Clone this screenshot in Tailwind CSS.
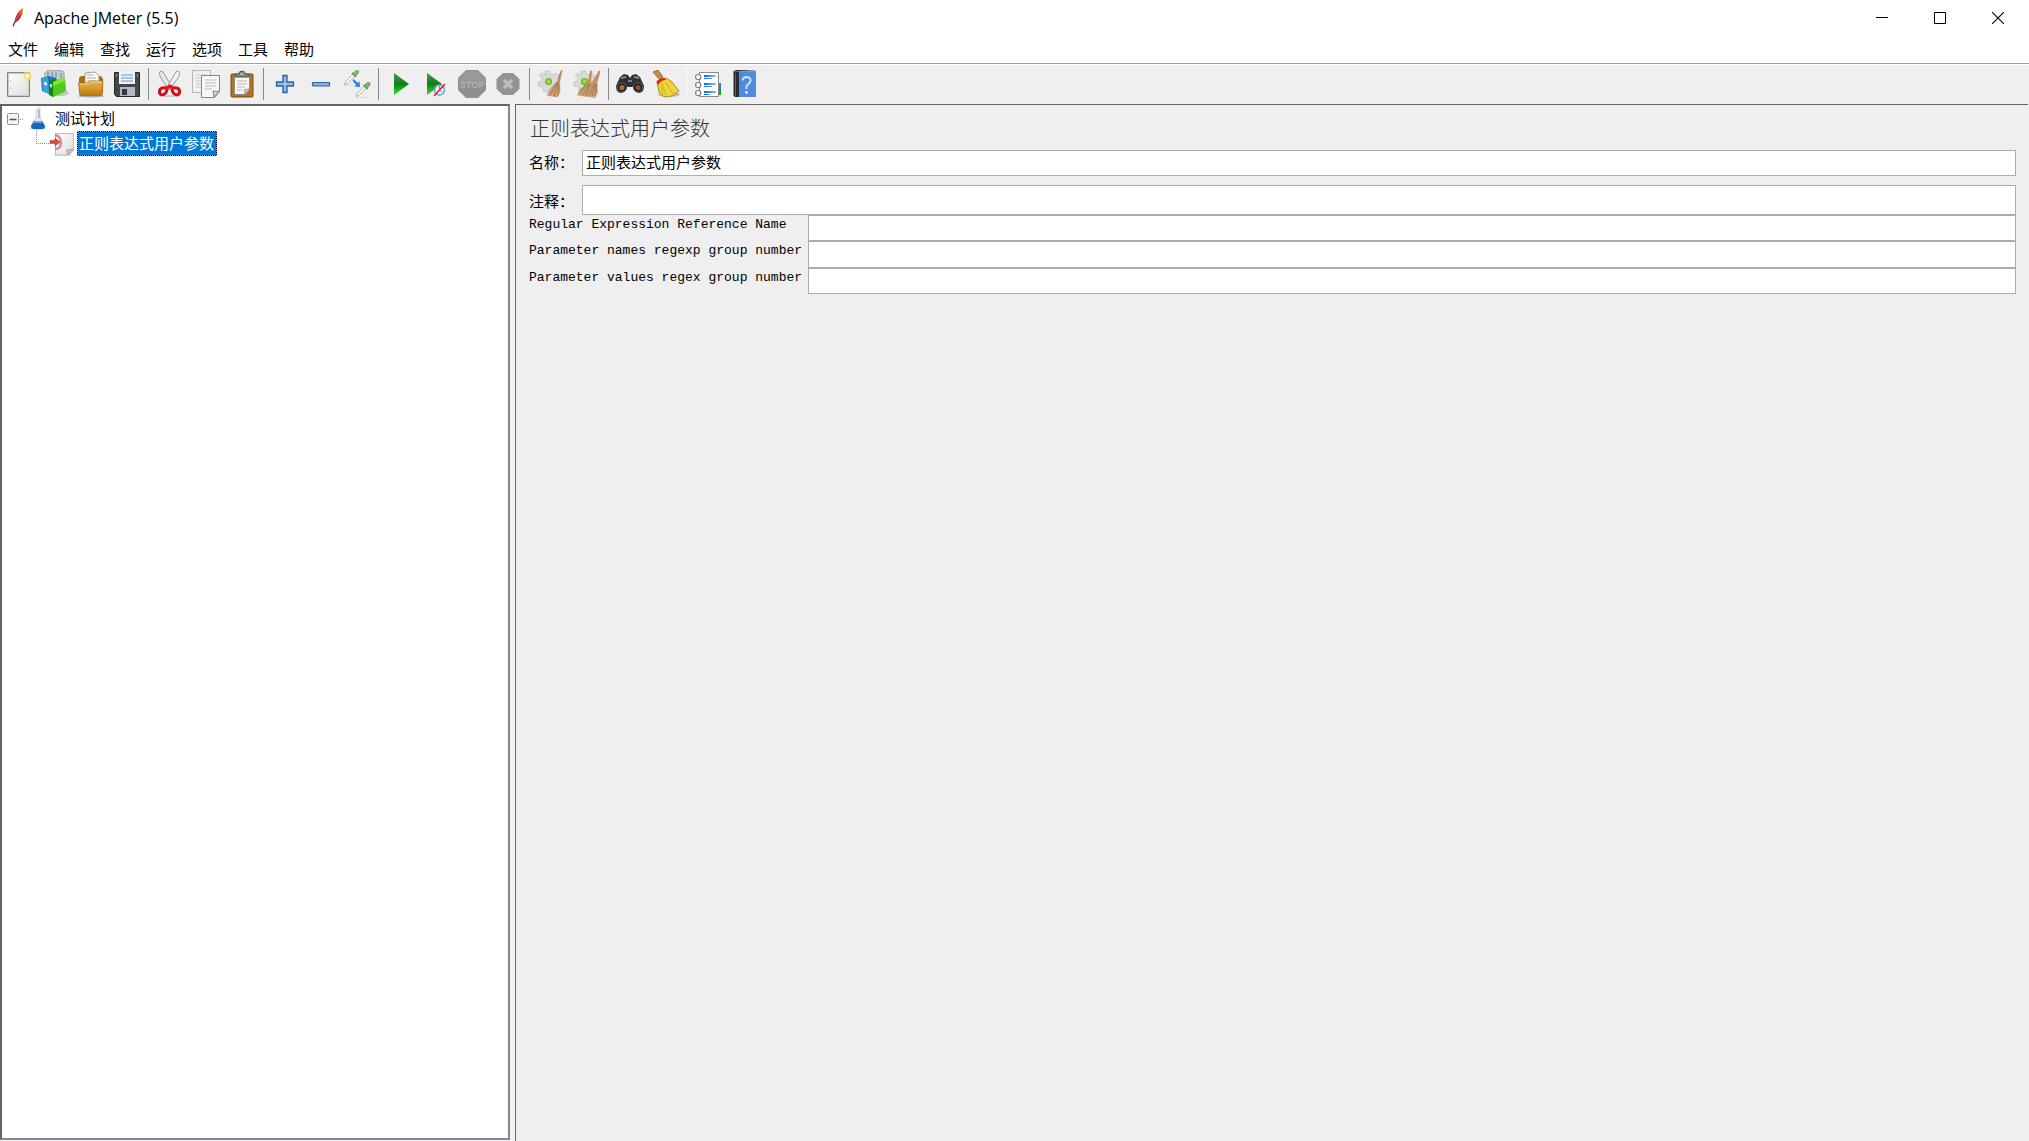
<!DOCTYPE html>
<html lang="zh-CN">
<head>
<meta charset="utf-8">
<title>Apache JMeter (5.5)</title>
<script src="https://cdn.jsdelivr.net/npm/@tailwindcss/browser@4"></script>
</head>
<body class="flex h-screen flex-col overflow-hidden bg-white font-['Noto_Sans_CJK_SC',sans-serif] text-[15px] leading-5 text-black">
<svg class="absolute size-0" aria-hidden="true">
  <defs>
    <linearGradient id="gold" x2="0" y2="1"><stop stop-color="#e9b84c"/><stop offset="1" stop-color="#bd7a10"/></linearGradient>
    <linearGradient id="play" x2="0" y2="1"><stop stop-color="#4d9a4d"/><stop offset=".48" stop-color="#1c7a1c"/><stop offset=".52" stop-color="#0a8a0a"/><stop offset="1" stop-color="#2fe02f"/></linearGradient>
    <linearGradient id="paper" x2="1" y2="1"><stop stop-color="#ffffff"/><stop offset="1" stop-color="#dcdcdc"/></linearGradient>
    <linearGradient id="blueline" x2="1" y2="0"><stop stop-color="#0c5fe8"/><stop offset="1" stop-color="#8fc0ff"/></linearGradient>
    <linearGradient id="feather" x1="1" y1="0" x2="0" y2="1"><stop stop-color="#f79a23"/><stop offset=".4" stop-color="#d22128"/><stop offset="1" stop-color="#6b2a7e"/></linearGradient>
    <radialGradient id="leaf"><stop stop-color="#b6ef5a"/><stop offset="1" stop-color="#5fb313"/></radialGradient>
    <linearGradient id="straw" x2="0" y2="1"><stop stop-color="#b98a5c"/><stop offset="1" stop-color="#d0a478"/></linearGradient>
  </defs>
</svg>

<header class="flex h-9 shrink-0 items-center">
  <svg class="ml-2.5 h-5 w-4" viewBox="0 0 16 20" aria-hidden="true"><path d="M13 0C9 2 6 7 4.500 13L3 18.500L5.500 14.500C9 13 11 9 12.500 5.500Z" fill="url(#feather)"/><path d="M11 3L5.500 13" stroke="#f2a8a0" stroke-width=".5"/><path d="M4.500 14.500L3 18.500" stroke="#3f2250"/></svg>
  <h1 class="ml-2 grow font-['Open_Sans',sans-serif] text-[16px]">Apache JMeter (5.5)</h1>
  <div class="mr-0.5 flex h-full">
    <button class="flex w-[58px] items-center justify-center" aria-label="最小化"><svg class="size-3" viewBox="0 0 12 12"><path d="M0 5.500H12" stroke="#000"/></svg></button>
    <button class="flex w-[58px] items-center justify-center" aria-label="最大化"><svg class="size-3" viewBox="0 0 12 12"><path d="M.5.5h11v11H.5z" fill="none" stroke="#000"/></svg></button>
    <button class="flex w-[58px] items-center justify-center" aria-label="关闭"><svg class="size-3" viewBox="0 0 12 12"><path d="M0 0L12 12M12 0L0 12" stroke="#000" stroke-width="1.100"/></svg></button>
  </div>
</header>

<nav class="flex h-7 shrink-0 items-start gap-4 border-b border-[#a0a0a0] pt-[3px] pl-2">
  <button>文件</button><button>编辑</button><button>查找</button><button>运行</button><button>选项</button><button>工具</button><button>帮助</button>
</nav>

<div class="flex h-10 shrink-0 items-center border-t border-white bg-[#efefef] pb-px pl-px" role="toolbar">
  <button class="flex w-9 justify-center" aria-label="新建"><svg class="size-7" viewBox="0 0 28 28"><path d="M2.500 2.500h22v24h-22z" fill="#f6f6f6" stroke="#858585"/><path d="M3.500 3.500h20v22h-20z" fill="url(#paper)" stroke="#c9c9c4"/><circle cx="5.500" cy="11" r=".8" fill="#bbb"/><circle cx="5.500" cy="18" r=".8" fill="#bbb"/><circle cx="22.500" cy="6" r="4.500" fill="#f4e96d" opacity=".65"/><circle cx="22.500" cy="6" r="2.300" fill="#fffef0" stroke="#efd83e"/></svg></button>
  <button class="flex w-9 justify-center" aria-label="模板"><svg class="size-7" viewBox="0 0 28 28"><ellipse cx="20" cy="23" rx="8" ry="3" fill="#999" opacity=".5"/><path d="M3 4L7 0l7 1 4-1 5 2v9L8 13z" fill="#c1cdd2" stroke="#85959c" stroke-width=".8"/><path d="M7 2v7M11 2l1 7M15 2v6M20 3v6" stroke="#718188"/><path d="M0 8l8-2 7 2v18l-4-1L1 21z" fill="#1478b8"/><path d="M1 8l6-1 1 17-6-3z" fill="#36a5df"/><path d="M3 12l3 .5v3L3 15z" fill="#d9f0fa"/><path d="M8 11l6-2 4 1v14l-6 3-4-2z" fill="#16830f"/><path d="M12 12l12-5 1 14-13 6z" fill="#52c81b"/><path d="M12 12l12-5v4l-12 5z" fill="#7ce83d"/><path d="M9 14l2 .5v3L9 17z" fill="#cff4c3"/></svg></button>
  <button class="flex w-9 justify-center" aria-label="打开"><svg class="size-7" viewBox="0 0 28 28"><ellipse cx="14" cy="26" rx="13" ry="1.500" fill="#aaa"/><path d="M2 8l2-2h20l2 3v14H2z" fill="#a46f13"/><path d="M8 3l10-1 4 4v10H8z" fill="#fafafa" stroke="#8b8b8b" stroke-width=".8"/><path d="M10 5h6M10 8h9M10 11h9" stroke="#a8a8a8"/><path d="M1.500 13h9l3-2h12.500l-1 14.500H3z" fill="url(#gold)" stroke="#a8700f" stroke-width=".8"/><path d="M3 14h8l3-2h11" fill="none" stroke="#f5d27e"/></svg></button>
  <button class="flex w-9 justify-center" aria-label="保存"><svg class="size-7" viewBox="0 0 28 28"><path d="M1.500 2.500h25v24h-23l-2-2z" fill="#44474b" stroke="#25282b"/><path d="M6 2h16v12H6z" fill="#eff5fc"/><path d="M8 5h12M8 8h12M8 11h12" stroke="#8db5df" stroke-width="1.500"/><path d="M7 17h15v9H7z" fill="#b6b9bc"/><path d="M9 19h5v6H9z" fill="#34373b"/><path d="M3 4h1v3H3zM24 4h1v3h-1z" fill="#898c90"/></svg></button>
  <span class="flex h-8 w-[7px] justify-center"><span class="w-px bg-[#8a8a8a]"></span></span>
  <button class="flex w-9 justify-center" aria-label="剪切"><svg class="size-7" viewBox="0 0 28 28"><ellipse cx="14" cy="26" rx="10" ry="1" fill="#ccc"/><path d="M5 1Q2 2 5 8L13 20l3-3L7 2z" fill="#e8e8e8" stroke="#8d8d8d" stroke-width=".9"/><path d="M22 1q3 1 0 7L13 20l-2-3L20 2z" fill="#f4f4f4" stroke="#8d8d8d" stroke-width=".9"/><path d="M11 18c-4-1-8 0-7.500 4.500.5 4 7.500 3 7.500-4.500zM16 18c4-1 8 0 7.500 4.500-.5 4-7.500 3-7.500-4.500z" fill="#eee" stroke="#d70d13" stroke-width="3"/><path d="M10 18.500l4-2.500 4 2.500" fill="none" stroke="#e3171c" stroke-width="3"/></svg></button>
  <button class="flex w-9 justify-center" aria-label="复制"><svg class="size-7" viewBox="0 0 28 28"><path d="M.5.5h18v22H.5z" fill="#f0f0f0" stroke="#b5b5b5"/><path d="M4 5h11M4 8h5M4 11h5M4 14h5M4 17h5" stroke="#c8c8c8"/><path d="M9.500 5.500h18v16l-5 6h-13z" fill="#f6f6f6" stroke="#858585"/><path d="M13 10h11M13 13h11M13 16h11M13 19h7" stroke="#b9b9b9"/><path d="M27 21.500l-5 5.500-1-6z" fill="#d5d5d5" stroke="#858585"/></svg></button>
  <button class="flex w-9 justify-center" aria-label="粘贴"><svg class="size-7" viewBox="0 0 28 28"><rect x="3" y="4" width="22" height="23" rx="1" fill="#b2741e" stroke="#7b4c0f"/><path d="M6.500 6h15v13l-5 5.500h-10z" fill="#f7f7f7" stroke="#777" stroke-width=".7"/><path d="M9 11h10M9 14h10M9 17h8M9 20h5" stroke="#b5b5b5"/><path d="M22 19l-5 5.500-.5-5z" fill="#ccc" stroke="#858585" stroke-width=".8"/><path d="M7 7V4h4q0-3 3-3t3 3h4v3z" fill="#83867f" stroke="#54574f"/><path d="M12 4h4" stroke="#d6d6d0"/></svg></button>
  <span class="flex h-8 w-[7px] justify-center"><span class="w-px bg-[#8a8a8a]"></span></span>
  <button class="flex w-9 justify-center" aria-label="展开"><svg class="size-7" viewBox="0 0 28 28"><path d="M12 5.500h4v6.500h6.500v4H16v6.500h-4V16H5.500v-4H12z" fill="#86b1dd" stroke="#2d62a3" stroke-width="1.300"/><path d="M14 7v14M7 14h14" stroke="#aecdeb"/></svg></button>
  <button class="flex w-9 justify-center" aria-label="收起"><svg class="size-7" viewBox="0 0 28 28"><rect x="5.500" y="12.500" width="17" height="3.500" rx=".5" fill="#86b1dd" stroke="#2d62a3" stroke-width="1.200"/></svg></button>
  <button class="flex w-9 justify-center" aria-label="切换"><svg class="size-7" viewBox="0 0 28 28"><path d="M1 15h10M13 27.500h11" stroke="#d8d8d8"/><g id="dropper"><path d="M1.500 14.500l1-3 8-8 2 2-8 8z" fill="#f7f7f7" stroke="#a5a5a5" stroke-width=".8"/><path d="M9 3l4 4" stroke="#4d8837" stroke-width="1.500"/><path d="M9.500 3.500L13 .5q3.500-.5 2.500 2.500L12.500 6.500z" fill="#7dbb62" stroke="#5c9746" stroke-width=".7"/></g><use href="#dropper" x="11.500" y="12"/><path d="M10.500 9l4.500 4 1.500-2 .5 6-6-.5 2-1.500-3.500-4.500z" fill="#2187f3"/></svg></button>
  <span class="flex h-8 w-[7px] justify-center"><span class="w-px bg-[#8a8a8a]"></span></span>
  <button class="flex w-9 justify-center" aria-label="启动"><svg class="size-7" viewBox="0 0 28 28"><path d="M8 3l15 11L8 25z" fill="url(#play)"/></svg></button>
  <button class="flex w-9 justify-center" aria-label="不停顿启动"><svg class="size-7" viewBox="0 0 28 28"><path d="M5 3l15 11L5 25z" fill="url(#play)"/><circle cx="17.500" cy="20" r="5" fill="#e9f2f9" stroke="#6da4d6" stroke-width="1.500"/><path d="M17.500 16v4l2.500 2" fill="none" stroke="#6793b8"/><path d="M12 26L23 14" stroke="#e02020" stroke-width="1.600"/></svg></button>
  <button class="flex w-9 justify-center" aria-label="停止"><svg class="size-7" viewBox="0 0 28 28"><path d="M8 0h12l8 8v12l-8 8H8l-8-8V8z" fill="#8f8f8f"/><path d="M8.500 1h11L27 8.500v5H1v-5z" fill="#999"/><text x="14" y="18" text-anchor="middle" font-family="Liberation Sans" font-size="9" font-weight="700" fill="#b1b1b1">STOP</text></svg></button>
  <button class="flex w-9 justify-center" aria-label="关闭线程"><svg class="size-7" viewBox="0 0 28 28"><path d="M9 3h10l6.500 6v10L19 25H9l-6.500-6V9z" fill="#939393"/><path d="M10 10l8 8M18 10l-8 8" stroke="#bcbcbc" stroke-width="3.500"/></svg></button>
  <span class="flex h-8 w-[7px] justify-center"><span class="w-px bg-[#8a8a8a]"></span></span>
  <button class="flex w-9 justify-center" aria-label="清除"><svg class="size-7" viewBox="0 0 28 28"><g id="gear"><path d="M8 1h5v3l3 1 3-2 3 3-1 3 2 3v4l-3 1-2 4-3 1-2-2-3 2-4-1v-4l-5-1v-4l3-1 1-3-3-3 3-2 3 2z" fill="#d9d9d9" stroke="#c2c2c2" stroke-width=".8"/><circle cx="11.500" cy="11.500" r="3.500" fill="url(#leaf)"/></g><path d="M24 0l1.500.5-3 13 1 8-3 6-6-1-5-1 3-6 6-7 2-1z" fill="url(#straw)"/><path d="M20 13l-7 12M21 14l-4 12M22 14l-1 12M23 3l-3 12" fill="none" stroke="#977047" stroke-width=".8"/></svg></button>
  <button class="flex w-9 justify-center" aria-label="清除全部"><svg class="size-7" viewBox="0 0 28 28"><use href="#gear"/><path d="M17 1l2-.5-1 12 2-2 6-10 1.500.5-3.500 13 1 8-3 6-6-1-9-1-3-1 3-6 7-6 1-2z" fill="url(#straw)"/><path d="M14 13L6 24M16 14l-6 11M17 14l-4 12M22 13l-6 13M23 14l-4 12M24 14l-2 12" stroke="#977047" stroke-width=".8"/></svg></button>
  <span class="flex h-8 w-[7px] justify-center"><span class="w-px bg-[#8a8a8a]"></span></span>
  <button class="flex w-9 justify-center" aria-label="查找"><svg class="size-7" viewBox="0 0 28 28"><path d="M4 7l4-3 4 1 2 3 2-3 4-1 4 3 4 9q0 7-5 7-5-1-6-6h-6q-1 5-6 6-5 0-5-7z" fill="#303235"/><circle cx="6" cy="17.500" r="4.500" fill="#191a1b" stroke="#5f6266"/><circle cx="22" cy="17.500" r="4.500" fill="#191a1b" stroke="#5f6266"/><circle cx="6" cy="17.500" r="2.600" fill="#b7672c"/><circle cx="22" cy="17.500" r="2.600" fill="#8b5028"/><path d="M5 8l5-1M18 7l5 1M12 11h4" stroke="#989ca2" stroke-width="1.500"/></svg></button>
  <button class="flex w-9 justify-center" aria-label="重置查找"><svg class="size-7" viewBox="0 0 28 28"><ellipse cx="17" cy="24.500" rx="11" ry="2.500" fill="#bbb"/><path d="M1 2l5-2 5 7-3 3z" fill="#c8903e" stroke="#8a5d22" stroke-width=".8"/><path d="M5 11l9-3 6 4 7 9-7 5-8 1-5-5z" fill="#f1d63b" stroke="#ad8d12"/><path d="M10 14l4 11M14 13l7 11M9 17l2 7" stroke="#c6a51d" stroke-width=".9"/><path d="M4.500 12.500q3-5 8-4.500l1.500 2q-5 0-8 5z" fill="#dc2320"/></svg></button>
  <span class="flex h-8 w-[7px] justify-center"><span class="w-px bg-[#f6f6f6]"></span></span>
  <button class="flex w-9 justify-center" aria-label="函数助手"><svg class="size-7" viewBox="0 0 28 28"><path d="M23 13h3v6h-3z" fill="#2b7de9"/><path d="M23 19h3v6h-3z" fill="#14a514"/><path d="M4.500 2.500h19v24h-19z" fill="#fff" stroke="#8a8a8a"/><path d="M9 5h12v2H9zM9 8h8v1H9zM9 13h12v2H9zM9 16h8v1H9zM9 21h12v2H9zM9 24h6v1H9z" fill="url(#blueline)"/><g fill="#fff" stroke="#777" stroke-width="1.200"><rect x=".7" y="4.500" width="5" height="5" rx="2"/><rect x=".7" y="12.500" width="5" height="5" rx="2"/><rect x=".7" y="20.500" width="5" height="5" rx="2"/></g></svg></button>
  <button class="flex w-9 justify-center" aria-label="帮助"><svg class="size-7" viewBox="0 0 28 28"><path d="M2.500 1l3-1h18v27h-19l-2-1z" fill="#272b31"/><path d="M8 1h17v26H8z" fill="#4c8cdb"/><path d="M3 1h5l16-1v1.500H4z" fill="#aaa"/><path d="M4.500 3v23" stroke="#596068"/><path d="M11.500 10.500Q12 7 16 7q4 .5 3.500 4-1 3-4 5v3" fill="none" stroke="#d9eafa" stroke-width="1.800"/><circle cx="15.500" cy="22.500" r="1.400" fill="#d9eafa"/></svg></button>
</div>

<main class="flex min-h-0 grow gap-[5px] bg-[#f2f2f2] pr-px">
  <aside class="mb-px w-[510px] shrink-0 border-2 border-t-[#646464] border-r-[#828790] border-b-[#828790] border-l-[#646464] bg-white">
    <button class="flex h-6 items-center pl-[5px]">
      <svg class="h-6 w-12" viewBox="0 0 48 24" aria-hidden="true"><rect x=".5" y="7.500" width="11" height="11" rx="1" fill="#f5f5f5" stroke="#919191"/><path d="M2.500 13.500h7" stroke="#2b52b8" stroke-width="1.500"/><path d="M13 13.500h4" stroke="#999" stroke-dasharray="1 1"/><ellipse cx="31" cy="22.500" rx="9" ry="1.500" fill="#ddd"/><path d="M29 4l4-3v10l5 9q0 3-3 3h-8q-3 0-3-3l5-9z" fill="#e2e8ed" stroke="#c3ccd4" stroke-width=".8"/><path d="M27 15h8l3 5q0 3-3 3h-8q-3 0-3-3z" fill="#1565bb"/><path d="M27.500 15h7l1 2h-9z" fill="#64a5e3"/><path d="M32 4v8" stroke="#8797a5"/></svg>
      <span>测试计划</span>
    </button>
    <button class="flex h-[26px] items-stretch pt-px pl-[33px]">
      <svg class="h-[25px] w-[42px]" viewBox="0 0 42 25" aria-hidden="true"><path d="M1.500 0v13M1 12.500h14" fill="none" stroke="#8f8f8f" stroke-dasharray="1 1"/><ellipse cx="28" cy="24" rx="10" ry="1" fill="#ddd"/><path d="M20.500 2.500h18v17l-5 4.500h-13z" fill="url(#paper)" stroke="#bcbcbc"/><path d="M38 18.500L33 24l-1.500-5z" fill="#c9c9c9" stroke="#999" stroke-width=".8"/><path d="M20 4q6 1 6 7.500T20 18" fill="none" stroke="#cf6464" stroke-width="2.500" opacity=".7"/><path d="M15 9.500h5V7l5 4-5 4v-2.500h-5z" fill="#d64a4a" stroke="#b84040" stroke-width=".6"/></svg>
      <span class="border border-dotted border-[#ff8c28] bg-black"><span class="flex h-[23px] items-center bg-[#0078d7] px-px pr-0.5 pb-0.5 text-white">正则表达式用户参数</span></span>
    </button>
  </aside>

  <section class="min-w-0 grow border-t border-l border-[#646464] bg-[#efefef] pt-[10px] pr-3 pl-[13px]">
    <h2 class="mb-[9px] h-[26px] pl-px text-[20px] leading-[26px] font-light text-[#333]">正则表达式用户参数</h2>
    <form>
      <div class="mb-[9px] flex h-[26px] items-stretch">
        <label for="name" class="w-[53px] pt-[2px]">名称：</label>
        <input id="name" type="text" value="正则表达式用户参数" class="min-w-0 grow border border-[#abadb3] bg-white px-[3px] pb-0.5">
      </div>
      <div class="flex h-[30px] items-stretch">
        <label for="comment" class="w-[53px] pt-[6px]">注释：</label>
        <input id="comment" type="text" class="min-w-0 grow border border-[#abadb3] bg-white px-[3px]">
      </div>
      <div class="grid grid-cols-[279px_1fr] grid-rows-[26px_27px_26px]">
        <label for="ref" class="font-['Liberation_Mono',monospace] text-[13px] whitespace-nowrap">Regular Expression Reference Name</label>
        <input id="ref" type="text" class="border border-[#abadb3] bg-white px-[3px]">
        <label for="names" class="font-['Liberation_Mono',monospace] text-[13px] whitespace-nowrap">Parameter names regexp group number</label>
        <input id="names" type="text" class="border border-[#abadb3] bg-white px-[3px]">
        <label for="values" class="font-['Liberation_Mono',monospace] text-[13px] whitespace-nowrap">Parameter values regex group number</label>
        <input id="values" type="text" class="border border-[#abadb3] bg-white px-[3px]">
      </div>
    </form>
  </section>
</main>
</body>
</html>
